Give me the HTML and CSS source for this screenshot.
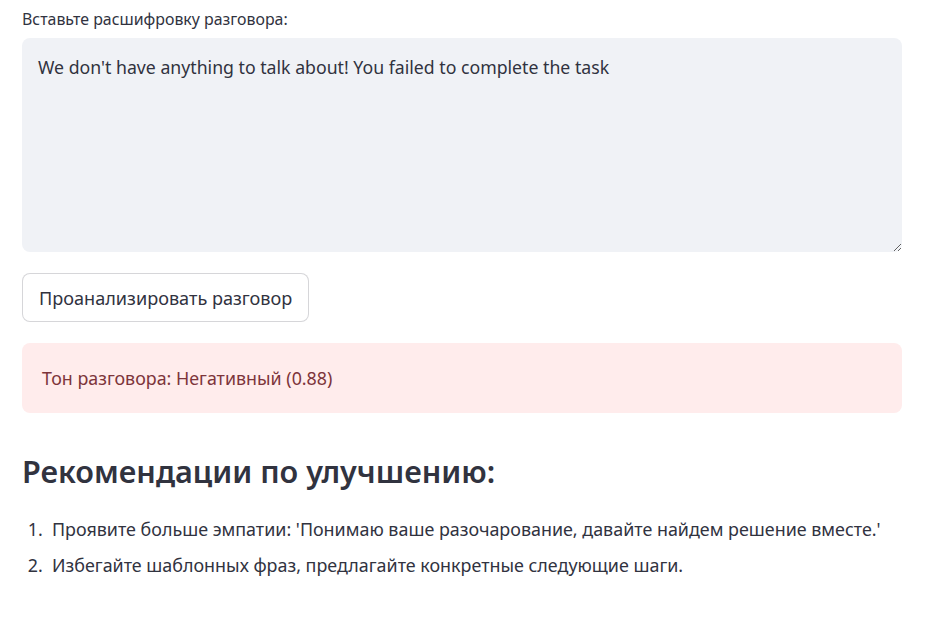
FILE: index.html
```html
<!DOCTYPE html>
<html lang="ru">
<head>
<meta charset="utf-8">
<title>Анализ разговора</title>
<link rel="stylesheet" href="styles.css">
</head>
<body>
<main class="main">
  <label class="label" for="transcript">Вставьте расшифровку разговора:</label>
  <div class="textarea-wrap">
    <textarea id="transcript" class="textarea">We don't have anything to talk about! You failed to complete the task</textarea>
  </div>
  <div class="button-row">
    <button class="button" type="button">Проанализировать разговор</button>
  </div>
  <div class="alert">Тон разговора: Негативный (0.88)</div>
  <h3 class="heading">Рекомендации по улучшению:</h3>
  <ol class="list">
    <li>Проявите больше эмпатии: 'Понимаю ваше разочарование, давайте найдем решение вместе.'</li>
    <li>Избегайте шаблонных фраз, предлагайте конкретные следующие шаги.</li>
  </ol>
</main>
</body>
</html>
```

FILE: styles.css
```css
* { box-sizing: border-box; }
html, body { margin: 0; padding: 0; background: #ffffff; }
body {
  font-family: "Noto Sans", "Open Sans", sans-serif;
  color: rgb(49, 51, 63);
}
.main {
  width: 880px;
  margin-left: 22px;
  padding-top: 8px;
  display: flex;
  flex-direction: column;
}
.label {
  font-size: 15.9px;
  line-height: 22px;
  height: 22px;
  margin-bottom: 8px;
}
.textarea-wrap { display: flex; }
.textarea {
  width: 100%;
  height: 214px;
  border: none;
  outline: none;
  border-radius: 8px;
  background: rgb(240, 242, 246);
  color: rgb(49, 51, 63);
  font-family: inherit;
  font-size: 17.7px;
  line-height: 24px;
  padding: 17px 16px;
  resize: vertical;
}
.button-row { margin-top: 21px; display: flex; }
.button {
  height: 49px;
  padding: 0 16px;
  border: 1px solid rgba(49, 51, 63, 0.2);
  border-radius: 8px;
  background: #ffffff;
  color: rgb(49, 51, 63);
  font-family: inherit;
  font-size: 18.1px;
}
.alert {
  margin-top: 21px;
  height: 70px;
  border-radius: 8px;
  background: rgb(255, 236, 236);
  color: rgb(125, 53, 59);
  font-size: 17.85px;
  display: flex;
  align-items: center;
  padding: 0 20px;
}
.heading {
  margin: 40px 0 0;
  font-size: 30.6px;
  font-weight: 600;
  line-height: 36px;
}
.list {
  margin: 28px 0 0;
  padding-left: 30px;
  font-size: 17.9px;
  line-height: 24px;
}
.list li { margin-bottom: 12px; padding-left: 0; }
.list li::marker { content: counter(list-item) ".\00a0\00a0"; }
```
